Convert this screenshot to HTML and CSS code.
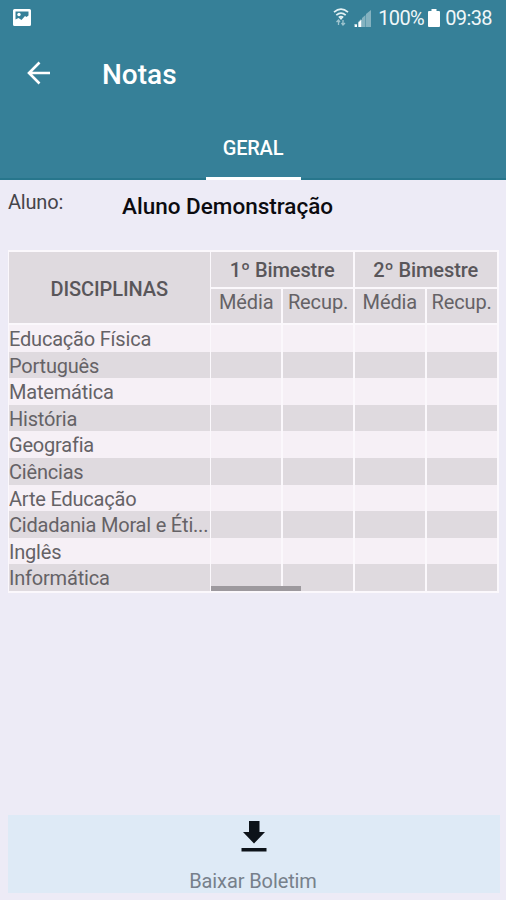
FILE: index.html
```html
<!DOCTYPE html>
<html lang="pt-BR">
<head>
    <meta charset="UTF-8">
    <meta name="viewport" content="width=device-width, initial-scale=1.0">
    <title>Notas</title>
    <link rel="stylesheet" href="styles.css">
</head>
<body>
    <header class="header">
        <div class="status-bar">
            <svg class="icon-image" width="18" height="17" viewBox="0 0 18 17">
                <path fill="#fff" fill-rule="evenodd" d="M1.500 0h15a1.500 1.500 0 0 1 1.500 1.500v14a1.500 1.500 0 0 1-1.500 1.500h-15A1.500 1.500 0 0 1 0 15.500v-14A1.500 1.500 0 0 1 1.500 0zM2.500 2.500v8l3-1.500 3 2 3.500-4 1.500 1 2-1.500v-4z"/>
                <circle cx="6" cy="5.500" r="1.700" fill="#fff"/>
            </svg>
            <div class="status-right">
                <svg class="icon-wifi" width="16" height="18" viewBox="0 0 16 18">
                    <g fill="none" stroke="#e4f1f4" stroke-width="1.700">
                        <path d="M1 4.200Q8-1.800 15 4.200"/>
                        <path d="M3.300 7.200Q8 3 12.700 7.200"/>
                        <path d="M5.800 9.500Q8 7.800 10.200 9.500"/>
                    </g>
                    <path d="M8 12L5.800 9.300h4.400z" fill="#e4f1f4"/>
                    <path d="M5.500 17v-5M3.500 14l2-2 1.500 2M10 12v5M8.500 15l1.500 2 2-2" fill="none" stroke="#9dc3ce" stroke-width="1.300"/>
                </svg>
                <svg class="icon-signal" width="17" height="17" viewBox="0 0 17 17">
                    <path d="M0 17v-3h3v3zM4 17v-5l3-3v8zM8 17V8l3.500-3v12zM12 17V4L17 0v17z" fill="#84b2c0"/>
                    <path d="M1 17v-2.500h2V17zM4.500 17v-4.500L7.500 9.500V17z" fill="#fff"/>
                </svg>
                <span class="battery-text">100%</span>
                <svg class="icon-battery" width="12" height="18" viewBox="0 0 12 18">
                    <path d="M3.500 0h5v2H11a1 1 0 0 1 1 1v14a1 1 0 0 1-1 1H1a1 1 0 0 1-1-1V3a1 1 0 0 1 1-1h2.500z" fill="#fff"/>
                </svg>
                <span class="clock">09:38</span>
            </div>
        </div>
        <div class="toolbar">
            <svg class="icon-back" width="24" height="24" viewBox="0 0 24 24">
                <path d="M23 12H2.500M12.500 1.500L2 12l10.500 10.500" fill="none" stroke="#fff" stroke-width="2.600"/>
            </svg>
            <h1>Notas</h1>
        </div>
        <nav class="tabs">
            <div class="tab active"><span>GERAL</span></div>
        </nav>
    </header>

    <main class="content">
        <div class="aluno">
            <span class="aluno-label">Aluno:</span>
            <span class="aluno-nome">Aluno Demonstração</span>
        </div>

        <div class="notas">
            <div class="notas-header">
                <div class="th disciplinas"><span>DISCIPLINAS</span></div>
                <div class="th bimestre"><span>1º Bimestre</span></div>
                <div class="th bimestre"><span>2º Bimestre</span></div>
                <div class="th sub"><span>Média</span></div>
                <div class="th sub"><span>Recup.</span></div>
                <div class="th sub"><span>Média</span></div>
                <div class="th sub"><span>Recup.</span></div>
            </div>
            <div class="row"><div><span>Educação Física</span></div><div></div><div></div><div></div><div></div></div>
            <div class="row"><div><span>Português</span></div><div></div><div></div><div></div><div></div></div>
            <div class="row"><div><span>Matemática</span></div><div></div><div></div><div></div><div></div></div>
            <div class="row"><div><span>História</span></div><div></div><div></div><div></div><div></div></div>
            <div class="row"><div><span>Geografia</span></div><div></div><div></div><div></div><div></div></div>
            <div class="row"><div><span>Ciências</span></div><div></div><div></div><div></div><div></div></div>
            <div class="row"><div><span>Arte Educação</span></div><div></div><div></div><div></div><div></div></div>
            <div class="row"><div><span>Cidadania Moral e Éti...</span></div><div></div><div></div><div></div><div></div></div>
            <div class="row"><div><span>Inglês</span></div><div></div><div></div><div></div><div></div></div>
            <div class="row"><div><span>Informática</span></div><div></div><div></div><div></div><div></div></div>
            <div class="scrollbar"></div>
        </div>
    </main>

    <footer class="baixar">
        <svg class="icon-download" width="26" height="31" viewBox="0 0 26 31">
            <path d="M8 0h10.500v11H24L13 22.500 2 11h6zM.5 27h25v3.500H.5z" fill="#0d1319"/>
        </svg>
        <span>Baixar Boletim</span>
    </footer>
</body>
</html>
```
FILE: styles.css
```css
* {
    box-sizing: border-box;
}
body {
    margin: 0;
    height: 900px;
    display: flex;
    flex-direction: column;
    font-family: Roboto, "Liberation Sans", sans-serif;
    background-color: #edebf6;
    overflow: hidden;
    white-space: nowrap;
}
.header {
    height: 180px;
    background: #368098;
    color: #fff;
    border-bottom: 2px solid #27768c;
}
.status-bar {
    display: flex;
    justify-content: space-between;
    height: 36px;
    padding: 0 14px 0 13px;
}
.icon-image {
    margin-top: 9px;
}
.status-right {
    display: flex;
    align-items: center;
    font-size: 20px;
    line-height: 36px;
    letter-spacing: -0.6px;
    color: #f0f7f9;
}
.icon-wifi {
    margin-right: 5px;
    margin-top: -2px;
}
.icon-signal {
    margin-right: 7px;
}
.icon-battery {
    margin: 0 5px 0 4px;
}
.toolbar {
    display: flex;
    align-items: center;
    height: 78px;
    padding-left: 27px;
}
h1 {
    margin: -2px 0 0 51px;
    font-size: 28px;
    font-weight: 500;
}
.icon-back {
    margin-top: -4px;
}
.tabs {
    display: flex;
    justify-content: center;
    height: 66px;
}
.tab {
    width: 95px;
    padding-top: 22px;
    text-align: center;
    font-size: 20px;
    font-weight: 500;
    line-height: 24px;
    letter-spacing: -0.2px;
    border-bottom: 3px solid #fff;
}
.content {
    flex: 1;
    padding: 10px 7px 0 8px;
}
.aluno {
    display: flex;
    height: 60px;
}
.aluno-label {
    width: 114px;
    font-size: 20px;
    line-height: 24px;
    letter-spacing: -0.2px;
    color: #45444a;
}
.aluno-nome {
    padding-top: 3px;
    font-size: 22.500px;
    font-weight: 500;
    line-height: 26px;
    color: #0c0b10;
}
.notas {
    position: relative;
    padding: 2px 2px 2px 1px;
    background: #fbf8fc;
    font-size: 20px;
    letter-spacing: -0.1px;
    color: #656266;
}
.notas-header,
.row {
    display: grid;
    grid-template-columns: 200.500px repeat(4, 1fr);
    column-gap: 1.700px;
    margin-right: 0.300px;
}
.notas-header {
    grid-template-rows: 35px 34px;
    row-gap: 2px;
    margin-bottom: 2px;
}
.th {
    display: flex;
    align-items: center;
    justify-content: center;
    background: #dfdadf;
}
.disciplinas {
    grid-row: span 2;
    font-weight: 500;
    padding-top: 2px;
    color: #59565a;
}
.bimestre {
    grid-column: span 2;
    font-weight: 500;
    color: #59565a;
}
.sub {
    padding-bottom: 8px;
}
.row {
    height: 26.620px;
    line-height: 29px;
    letter-spacing: -0.200px;
}
.row div {
    background: #f6f0f6;
    overflow: hidden;
}
.row:nth-child(odd) div {
    background: #dfdadf;
}
.scrollbar {
    position: absolute;
    left: 203px;
    bottom: 2px;
    width: 90px;
    height: 5px;
    background: #9d999e;
}
.baixar {
    display: flex;
    flex-direction: column;
    align-items: center;
    height: 78px;
    margin: 0 6px 7px 8px;
    padding-top: 6px;
    background: #deeaf6;
    font-size: 20px;
    line-height: 24px;
    letter-spacing: -0.1px;
    color: #77808b;
}
.baixar span {
    margin: 17px 2px 0 0;
}
```
